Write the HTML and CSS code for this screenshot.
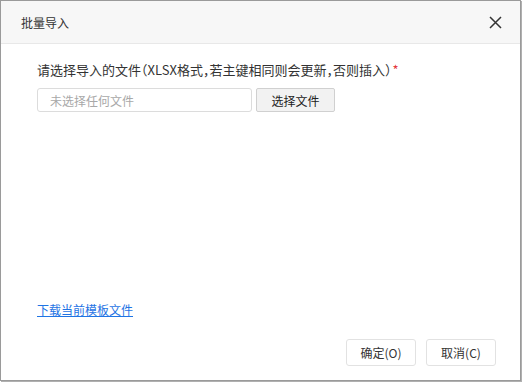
FILE: index.html
```html
<!DOCTYPE html>
<html lang="zh-CN">
<head>
  <meta charset="UTF-8">
  <title>批量导入</title>
  <link rel="stylesheet" href="styles.css">
</head>
<body>
  <div class="dialog">
    <div class="dialog-head">
      <span class="dialog-title">批量导入</span>
      <span class="dialog-close">
        <svg width="13" height="13" viewBox="0 0 13 13">
          <path d="M1 1L12 12M12 1L1 12" stroke="#333" stroke-width="1.5" fill="none"/>
        </svg>
      </span>
    </div>

    <div class="dialog-body">
      <div class="field-label">请选择导入的文件（XLSX格式，若主键相同则会更新，否则插入）<span class="req">*</span></div>
      <div class="file-row">
        <input class="file-name" placeholder="未选择任何文件" readonly>
        <button class="file-btn">选择文件</button>
      </div>
      <div class="spacer"></div>
      <a class="tpl-link" href="#">下载当前模板文件</a>
    </div>

    <div class="dialog-foot">
      <button class="btn">确定(O)</button>
      <button class="btn">取消(C)</button>
    </div>
  </div>
</body>
</html>
```

FILE: styles.css
```css
* {
  margin: 0; padding: 0; box-sizing: border-box;
  font-family: 'Noto Sans CJK SC', 'Noto Sans', sans-serif;
}
html, body {
  width: 522px;
  height: 382px;
  background: #fff;
  overflow: hidden;
}
.dialog {
  width: 521px;
  height: 381px;
  border: 1px solid #9a9a9a;
  box-shadow: 1px 1px 0 #b0b0b0;
  display: flex;
  flex-direction: column;
  background: #fff;
}
.dialog-head {
  height: 43px;
  background: #f7f7f7;
  border-bottom: 1px solid #e8e8e8;
  display: flex;
  align-items: center;
  justify-content: space-between;
  padding: 0 18px 0 20px;
}
.dialog-title {
  font-size: 12px;
  color: #333;
}
.dialog-close {
  display: flex;
  align-items: center;
}
.dialog-body {
  flex-grow: 1;
  display: flex;
  flex-direction: column;
  padding: 16px 36px 0 36px;
}
.field-label {
  font-size: 13px;
  color: #333;
  line-height: 20px;
  font-feature-settings: "halt";
}
.req {
  color: #e4393c;
  margin-left: 1px;
}
.file-row {
  display: flex;
  gap: 4px;
  margin-top: 8px;
}
.file-name {
  width: 215px;
  height: 24px;
  border: 1px solid #dcdcdc;
  border-radius: 3px;
  padding: 0 12px;
  font-size: 12px;
  color: #333;
  outline: none;
}
.file-name::placeholder {
  color: #a8a8a8;
}
.file-btn {
  width: 79px;
  height: 24px;
  background: #f2f2f2;
  border: 1px solid #d0d0d0;
  border-radius: 2px;
  font-size: 12px;
  color: #222;
}
.spacer {
  flex-grow: 1;
}
.tpl-link {
  font-size: 12px;
  color: #1f74e4;
  text-decoration: underline;
  line-height: 18px;
  align-self: flex-start;
  margin-bottom: 20px;
}
.dialog-foot {
  display: flex;
  justify-content: flex-end;
  gap: 10px;
  padding: 0 24px 14px 0;
}
.btn {
  width: 70px;
  height: 27px;
  background: #fff;
  border: 1px solid #e2e2e2;
  border-radius: 3px;
  font-size: 12px;
  color: #333;
}
```
